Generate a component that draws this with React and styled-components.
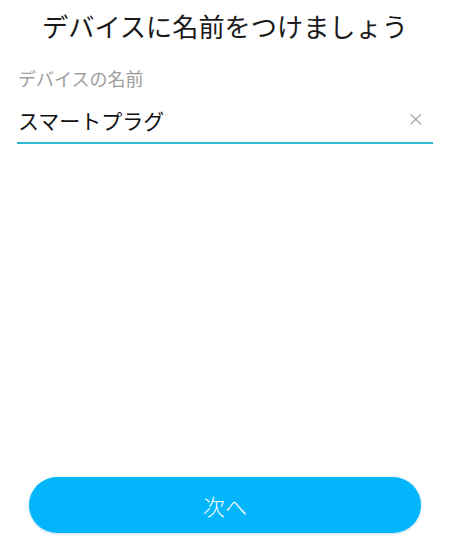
import React from "react";
import styled, { createGlobalStyle } from "styled-components";

const Global = createGlobalStyle`
  html, body { margin: 0; padding: 0; background: #fff; }
  body { font-family: "Noto Sans CJK JP", "Noto Sans", sans-serif; }
  * { box-sizing: border-box; }
`;

const Page = styled.div`
  height: 548px;
  display: flex;
  flex-direction: column;
  padding: 0 17px 15px;
`;

const Title = styled.h1`
  margin: 7px 0 0;
  font-size: 26.2px;
  line-height: 38px;
  font-weight: 400;
  color: #1a1a1a;
  text-align: center;
`;

const Field = styled.div`
  margin-top: 20px;
  display: flex;
  flex-direction: column;
`;

const Label = styled.div`
  font-size: 18px;
  line-height: 26px;
  color: #9d9d9d;
  padding-left: 1px;
`;

const InputRow = styled.div`
  margin-top: 9px;
  display: flex;
  align-items: center;
  height: 44px;
  border-bottom: 2px solid #30b9d3;
`;

const Value = styled.div`
  flex: 1;
  font-size: 21px;
  line-height: 30px;
  color: #111;
  padding-left: 1px;
  padding-bottom: 2px;
`;

const Clear = styled.span`
  font-size: 22px;
  line-height: 1;
  color: #a0a0a0;
  margin-right: 8px;
  padding-bottom: 4px;
  font-family: "DejaVu Sans", sans-serif;
  font-weight: 300;
`;

const Spacer = styled.div`
  flex: 1;
`;

const NextButton = styled.button`
  margin: 0 12px;
  height: 56px;
  border: none;
  border-radius: 28px;
  background: #03b5fb;
  color: #fff;
  font-family: inherit;
  font-size: 22px;
  font-weight: 300;
  box-shadow: 0 1px 3px rgba(0, 120, 200, 0.25);
`;

export default function App() {
  return (
    <>
      <Global />
      <Page>
        <Title>デバイスに名前をつけましょう</Title>
        <Field>
          <Label>デバイスの名前</Label>
          <InputRow>
            <Value>スマートプラグ</Value>
            <Clear>×</Clear>
          </InputRow>
        </Field>
        <Spacer />
        <NextButton>次へ</NextButton>
      </Page>
    </>
  );
}
